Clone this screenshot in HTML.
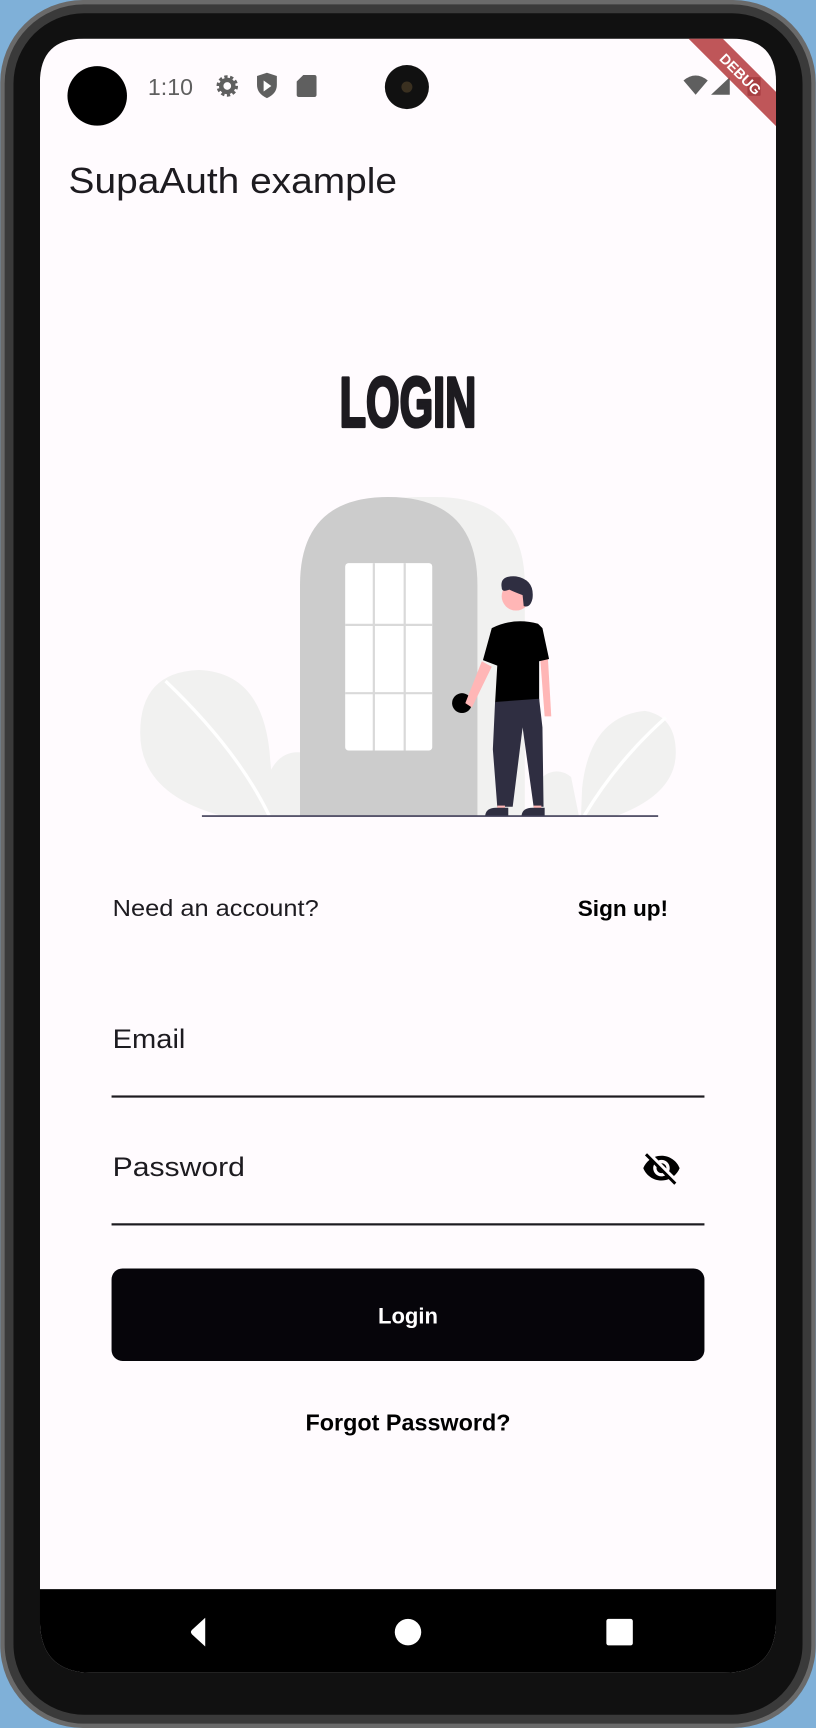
<!DOCTYPE html>
<html><head><meta charset="utf-8"><style>
html,body{margin:0;padding:0;background:#7fb0d8;}
svg{display:block}
</style></head><body>
<svg width="816" height="1728" viewBox="0 0 740 1568" xmlns="http://www.w3.org/2000/svg">
<defs>
<clipPath id="scr"><path d="M36 75 Q36 35 76 35 L664 35 Q704 35 704 75 L704 1470 Q704 1518 656 1518 L84 1518 Q36 1518 36 1470 Z"/></clipPath>
</defs>
<rect x="0" y="0" width="740" height="1568" fill="#7fb0d8"/>
<rect x="0" y="0" width="740" height="1568" rx="75" fill="#6a6a6a"/>
<rect x="4" y="4" width="732" height="1560" rx="72" fill="#3a3a3a"/>
<rect x="12" y="12" width="716" height="1544" rx="64" fill="#111"/>
<g clip-path="url(#scr)">
<rect x="36" y="35" width="668" height="1483" fill="#fffbfe"/>
<rect x="36" y="1442" width="668" height="76" fill="#000"/>
<!-- status bar -->
<circle cx="88" cy="87" r="27" fill="#000"/>
<text x="134" y="86" font-family="Liberation Sans, sans-serif" font-size="21" fill="#5f5f5f">1:10</text>
<circle cx="206" cy="78" r="5.5" fill="none" stroke="#5f5f5f" stroke-width="4"/>
<circle cx="206" cy="78" r="8.5" fill="none" stroke="#5f5f5f" stroke-width="2.5" stroke-dasharray="3 2.3"/>
<path d="M233 69 L242 66 L251 69 L251 77 Q251 85 242 89 Q233 85 233 77 Z" fill="#5f5f5f"/>
<path d="M239 73 L246 78 L239 83 Z" fill="#fff"/>
<path d="M275 68 L285 68 Q287 68 287 70 L287 86 Q287 88 285 88 L271 88 Q269 88 269 86 L269 74 Z" fill="#5f5f5f"/>
<circle cx="369" cy="79" r="20" fill="#111"/>
<circle cx="369" cy="79" r="5" fill="#3a3020"/>
<path d="M620 73 Q631 64 642 73 L631 86 Z" fill="#5f5f5f"/>
<path d="M645 86 L662 70 L662 86 Z" fill="#5f5f5f"/>
<rect x="678" y="70" width="12" height="17" rx="1" fill="#5f5f5f"/>
<!-- debug banner -->
<g transform="translate(672,67) rotate(45)">
<rect x="-60" y="-11" width="120" height="22" fill="#b4383c" opacity="0.85"/>
<text x="0" y="5" text-anchor="middle" font-family="Liberation Sans, sans-serif" font-size="13" font-weight="bold" fill="#fff">DEBUG</text>
</g>
<text x="62" y="175" textLength="298" lengthAdjust="spacingAndGlyphs" font-family="Liberation Sans, sans-serif" font-size="33" fill="#1d1b20">SupaAuth example</text>
<!-- LOGIN -->
<text x="308" y="387" textLength="124" lengthAdjust="spacingAndGlyphs" font-family="Liberation Sans, sans-serif" font-size="64" font-weight="bold" fill="#1d1b20" stroke="#1d1b20" stroke-width="3" stroke-linejoin="round">LOGIN</text>
<!-- illustration -->
<path d="M127 665 Q127 610 180 608 Q240 610 245 690 L250 740 L200 740 Q127 720 127 665 Z" fill="#f1f1f0"/>
<path d="M245 700 Q255 680 275 683 L275 740 L245 740 Z" fill="#f1f1f0"/>
<path d="M150 618 Q215 680 244 740" stroke="#fff" stroke-width="3" fill="none"/>
<path d="M613 683 Q613 650 585 645 Q535 650 528 715 L527 740 L560 740 Q613 720 613 683 Z" fill="#f1f1f0"/>
<path d="M492 705 Q505 695 518 705 L525 740 L492 740 Z" fill="#f1f1f0"/>
<path d="M604 651 Q560 690 530 740" stroke="#fff" stroke-width="3" fill="none"/>
<path d="M300 531 Q300 451 380 451 L395 451 Q476 451 476 531 L476 740 L300 740 Z" fill="#f1f1f0"/>
<path d="M272 531 Q272 451 352 451 Q433 451 433 531 L433 740 L272 740 Z" fill="#cccccc"/>
<rect x="313" y="511" width="79" height="170" rx="3" fill="#fff"/>
<path d="M339 511 V681 M367 511 V681 M313 567 H392 M313 629 H392" stroke="#d9d9d9" stroke-width="2"/>
<circle cx="419" cy="638" r="9" fill="#000"/>
<!-- person -->
<path d="M437 600 L422 638 L428 642 L446 605 Z" fill="#ffb6b6"/>
<path d="M490 598 L494 650 L500 650 L497 598 Z" fill="#ffb6b6"/>
<circle cx="468" cy="541" r="13" fill="#ffb6b6"/>
<path d="M455 533 Q453 522 468 523 Q485 526 483 543 Q481 552 475 550 L474 540 Q466 537 462 535 Q455 538 455 533 Z" fill="#2f2e41"/>
<path d="M446 570 Q466 560 488 566 L492 570 L498 598 L489 600 L489 636 L449 638 L451 604 L438 599 Z" fill="#000"/>
<path d="M449 637 L489 634 L492 660 L493 732 L484 732 L474 660 L465 732 L451 732 L447 680 Z" fill="#2f2e41"/>
<rect x="451" y="731" width="7" height="5" fill="#ffb6b6"/>
<rect x="484" y="731" width="7" height="5" fill="#ffb6b6"/>
<path d="M440 740 Q441 733 450 733 L461 733 L461 740 Z" fill="#2f2e41"/>
<path d="M473 740 Q474 733 483 733 L494 733 L494 740 Z" fill="#2f2e41"/>
<line x1="183" y1="740.5" x2="597" y2="740.5" stroke="#3f3d56" stroke-width="1.5"/>
<!-- form -->
<text x="102" y="831" textLength="187" lengthAdjust="spacingAndGlyphs" font-family="Liberation Sans, sans-serif" font-size="21" fill="#1d1b20">Need an account?</text>
<text x="524" y="831" textLength="82" lengthAdjust="spacingAndGlyphs" font-family="Liberation Sans, sans-serif" font-size="20" font-weight="bold" fill="#000">Sign up!</text>
<text x="102" y="951" textLength="66" lengthAdjust="spacingAndGlyphs" font-family="Liberation Sans, sans-serif" font-size="24" fill="#1d1b20">Email</text>
<rect x="101" y="994" width="538" height="2" fill="#1d1b20"/>
<text x="102" y="1067" textLength="120" lengthAdjust="spacingAndGlyphs" font-family="Liberation Sans, sans-serif" font-size="24" fill="#1d1b20">Password</text>
<g transform="translate(582,1042) scale(1.5)"><path fill="#000" d="M12 7c2.76 0 5 2.24 5 5 0 .65-.13 1.26-.36 1.83l2.920 2.92c1.51-1.26 2.7-2.890 3.43-4.75-1.73-4.39-6-7.5-11-7.5-1.4 0-2.74.25-3.98.7l2.16 2.16C10.74 7.13 11.35 7 12 7zM2 4.27l2.28 2.28.46.46C3.08 8.3 1.78 10.02 1 12c1.73 4.39 6 7.5 11 7.5 1.55 0 3.03-.3 4.38-.84l.42.42L19.73 22 21 20.730 3.27 3 2 4.27zM7.53 9.8l1.55 1.55c-.05.21-.08.43-.08.65 0 1.66 1.34 3 3 3 .22 0 .44-.03.65-.08l1.55 1.55c-.67.33-1.41.53-2.2.53-2.76 0-5-2.24-5-5 0-.79.2-1.53.53-2.2zm4.31-.78l3.15 3.15.02-.16c0-1.660-1.34-3-3-3l-.17.01z"/></g>
<rect x="101" y="1110" width="538" height="2" fill="#1d1b20"/>
<rect x="101" y="1151" width="538" height="84" rx="10" fill="#06050a"/>
<text x="370" y="1201" text-anchor="middle" font-family="Liberation Sans, sans-serif" font-size="20" font-weight="bold" fill="#fff">Login</text>
<text x="277" y="1298" textLength="186" lengthAdjust="spacingAndGlyphs" font-family="Liberation Sans, sans-serif" font-size="21" font-weight="bold" fill="#000">Forgot Password?</text>
<!-- nav -->
<path d="M186 1468 L186 1494 L174 1483 Q172 1481 174 1479 Z" fill="#fff"/>
<circle cx="370" cy="1481" r="12" fill="#fff"/>
<rect x="550" y="1469" width="24" height="24" rx="2" fill="#fff"/>
</g>
</svg>
</body></html>
